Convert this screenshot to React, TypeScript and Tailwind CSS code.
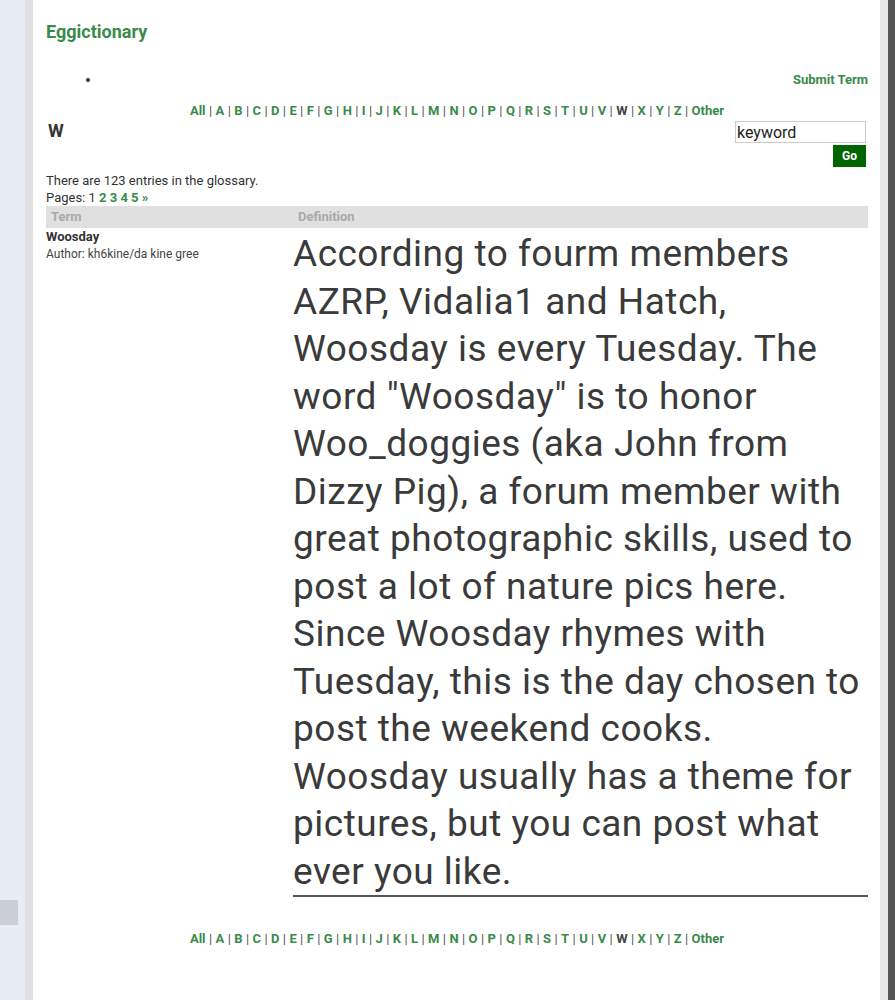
const letters = ["All", "A", "B", "C", "D", "E", "F", "G", "H", "I", "J", "K", "L", "M", "N", "O", "P", "Q", "R", "S", "T", "U", "V", "W", "X", "Y", "Z", "Other"];

function AlphaBar() {
  return (
    <div className="flex justify-center text-[13px] font-bold leading-[16px]">
      {letters.map((l, i) => (
        <span key={l} className="flex">
          {i > 0 && <span className="px-[3.4px] font-normal text-[#555]">|</span>}
          <span className={l === "W" ? "text-[#444]" : "text-[#3a8a4a]"}>{l}</span>
        </span>
      ))}
    </div>
  );
}

export default function App() {
  return (
    <div className="flex min-h-[1000px] bg-white font-['Roboto',sans-serif]">
      {/* left sidebar strip */}
      <div className="w-[25px] shrink-0 bg-[#e8edf5] pt-[900px]">
        <div className="h-[25px] w-[18px] bg-[#ccd0d6]" />
      </div>
      <div className="w-[8px] shrink-0 bg-[#e0e0e0]" />

      <div className="flex-1 pl-[13px] pr-[12px]">
        <h1 className="pt-[20px] text-[18px] font-bold leading-[24px] text-[#3a8a4a]">Eggictionary</h1>

        <div className="mt-[28px] flex h-[16px] items-center justify-between">
          <div className="ml-[40px] h-[4px] w-[4px] rounded-full bg-[#333]" />
          <a className="text-[13px] font-bold leading-[16px] text-[#3a8a4a]">Submit Term</a>
        </div>

        <div className="mt-[15px]">
          <AlphaBar />
        </div>

        <div className="flex items-start justify-between">
          <h2 className="pl-[2px] text-[18px] font-bold leading-[24px] text-[#333]">W</h2>
          <div className="mt-[2px] flex flex-col items-end pr-[2px]">
            <input
              defaultValue="keyword"
              className="h-[22px] w-[131px] border border-[#ccc] px-[1px] text-[16px] leading-[20px] text-[#222] outline-none"
            />
            <button className="mt-[2px] h-[22px] w-[33px] bg-[#006400] text-[12px] font-bold text-white">Go</button>
          </div>
        </div>

        <p className="mt-[5px] text-[13px] leading-[17px] text-[#333]">There are 123 entries in the glossary.</p>
        <p className="text-[13px] leading-[17px] text-[#333]">
          Pages: 1{" "}
          <span className="font-bold text-[#3a8a4a]">2 3 4 5 »</span>
        </p>

        <div className="grid grid-cols-[247px_1fr]">
          <div className="bg-[#e0e0e0] px-[5px] text-[13px] font-bold leading-[22px] text-[#aaa]">Term</div>
          <div className="bg-[#e0e0e0] px-[5px] text-[13px] font-bold leading-[22px] text-[#aaa]">Definition</div>

          <div className="pt-[1px]">
            <div className="text-[13px] font-bold leading-[16px] text-[#333]">Woosday</div>
            <div className="text-[12px] leading-[18px] text-[#444]">Author: kh6kine/da kine gree</div>
          </div>
          <div className="border-b-2 border-[#555] pt-[2px] text-[37px] leading-[47.5px] tracking-[0.5px] text-[#3a3a3a]">
            According to fourm members AZRP, Vidalia1 and Hatch, Woosday is every Tuesday. The word "Woosday" is to honor Woo_doggies (aka John from Dizzy Pig), a forum member with great photographic skills, used to post a lot of nature pics here. Since Woosday rhymes with Tuesday, this is the day chosen to post the weekend cooks. Woosday usually has a theme for pictures, but you can post what ever you like.
          </div>
        </div>

        <div className="mt-[34px]">
          <AlphaBar />
        </div>
      </div>

      {/* right scrollbar edge */}
      <div className="w-[8px] shrink-0 bg-[#e6e6e6]" />
      <div className="w-[7px] shrink-0 bg-[#555]" />
    </div>
  );
}
